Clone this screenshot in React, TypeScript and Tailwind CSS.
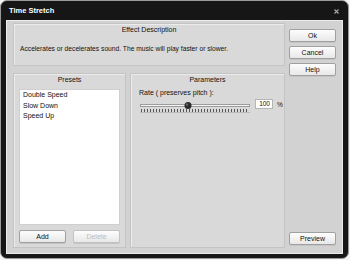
import React from 'react'

const font = { fontFamily: '"Liberation Sans", Arial, sans-serif' }

const Btn = ({ label, disabled }: { label: string; disabled?: boolean }) => (
  <button
    className={`h-[13px] w-[47px] rounded-[2px] border border-[#a0a0a0] bg-gradient-to-b from-[#fdfdfd] to-[#e8e8e8] text-[7px] leading-none shadow-[0_1px_0_#c4c4c4] ${
      disabled ? 'border-[#c2c2c2] from-[#e6e6e6] to-[#dcdcdc] text-[#bdbdbd]' : 'text-[#111]'
    }`}
  >
    {label}
  </button>
)

const Panel = ({ title, className, children }: { title: string; className?: string; children?: React.ReactNode }) => (
  <div className={`flex flex-col border border-[#c4c4c4] bg-[#d9d9d9] shadow-[inset_1px_1px_0_#ececec] ${className ?? ''}`}>
    <div className="pt-[1px] text-center text-[7px] leading-[10px] text-[#111]">{title}</div>
    {children}
  </div>
)

const Slider = () => {
  const ticks = []
  for (let x = 1; x <= 108; x += 3) ticks.push(x)
  return (
    <svg width="110" height="12" viewBox="0 0 110 12">
      <rect x="0.5" y="3.5" width="109" height="2" fill="#f2f2f2" stroke="#9c9c9c" strokeWidth="1" />
      <circle cx="48" cy="4.5" r="3.5" fill="#2a2a2a" />
      <circle cx="47" cy="3.5" r="1.2" fill="#666" />
      {ticks.map((x) => (
        <rect key={x} x={x} y="8" width="1" height={x === 1 || x > 105 ? 4 : 3} fill="#555" />
      ))}
      <rect x="0" y="11" width="110" height="1" fill="#bbb" />
    </svg>
  )
}

export default function App() {
  return (
    <div className="h-[260px] w-[350px] bg-[#f4f4f4] p-0" style={font}>
      <div className="flex h-[259px] w-[349px] flex-col rounded-[7px] border border-[#9a9a9a] bg-[#161616]">
        {/* title bar */}
        <div className="flex h-[19px] items-center justify-between pl-[8px] pr-[9px]">
          <span className="text-[7.5px] font-bold text-white">Time Stretch</span>
          <svg width="5" height="5" viewBox="0 0 5 5" className="mt-[1px]">
            <path d="M0.5 0.5 L4.5 4.5 M4.5 0.5 L0.5 4.5" stroke="#a8a8a8" strokeWidth="1.1" />
          </svg>
        </div>

        {/* client area */}
        <div className="mx-[5px] mb-[4px] flex flex-1 gap-[4px] border border-[#ececec] bg-[#d2d2d2] pl-[6px] pr-[5px] pt-[2px] pb-[5px]">
          <div className="flex w-[272px] flex-col gap-[7px]">
            <Panel title="Effect Description" className="h-[43px]">
              <div className="mt-[11px] pl-[6px] text-[6.7px] leading-none text-[#111]">
                Accelerates or decelerates sound. The music will play faster or slower.
              </div>
            </Panel>
            <div className="flex flex-1 gap-[4px]">
              <Panel title="Presets" className="w-[113px]">
                <div className="mx-[5px] mt-[4px] flex h-[136px] flex-col border border-[#cfcfcf] bg-white pl-[3px] text-[7px] leading-[10.5px] text-[#111]">
                  <span>Double Speed</span>
                  <span>Slow Down</span>
                  <span>Speed Up</span>
                </div>
                <div className="mx-[5px] mt-[5px] flex justify-between">
                  <Btn label="Add" />
                  <Btn label="Delete" disabled />
                </div>
              </Panel>
              <Panel title="Parameters" className="flex-1">
                <div className="mt-[4px] pl-[8px] text-[7px] leading-none text-[#111]">Rate ( preserves pitch ):</div>
                <div className="mt-[5px] flex items-start pl-[9px]">
                  <Slider />
                  <div className="ml-[5px] mt-[-2px] flex h-[10px] w-[18px] items-center justify-end border border-[#b5b5b5] bg-white pr-[2px] text-[6.5px] leading-none text-[#111]">
                    100
                  </div>
                  <span className="ml-[4px] text-[6.5px] leading-[8px] text-[#111]">%</span>
                </div>
              </Panel>
            </div>
          </div>

          <div className="flex flex-1 flex-col pt-[6px]">
            <div className="flex flex-col gap-[4px]">
              <Btn label="Ok" />
              <Btn label="Cancel" />
              <Btn label="Help" />
            </div>
            <div className="mt-auto">
              <Btn label="Preview" />
            </div>
          </div>
        </div>
      </div>
    </div>
  )
}
